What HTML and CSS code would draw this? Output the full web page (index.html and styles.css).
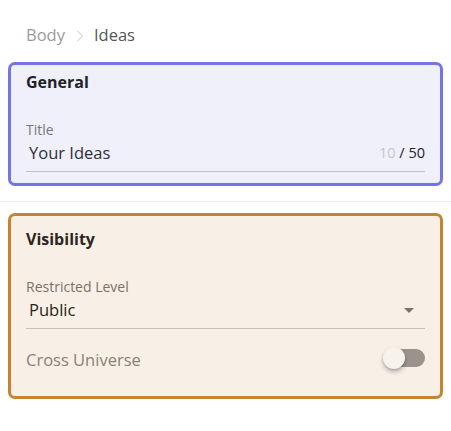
FILE: index.html
```html
<!DOCTYPE html>
<html>
<head>
<meta charset="utf-8">
<link rel="stylesheet" href="styles.css">
</head>
<body>
<div class="page">
  <nav class="crumbs">
    <span class="crumb">Body</span>
    <svg class="sep" width="8" height="12" viewBox="0 0 8 12"><path d="M1.5 1 L6.5 6 L1.5 11" fill="none" stroke="#c2c2c2" stroke-width="1"/></svg>
    <span class="crumb current">Ideas</span>
  </nav>

  <section class="card card-general">
    <h2 class="card-title">General</h2>
    <div class="field">
      <label class="field-label">Title</label>
      <div class="field-control">
        <span class="field-value">Your Ideas</span>
        <span class="counter"><span class="count">10</span> / 50</span>
      </div>
    </div>
  </section>

  <hr class="divider">

  <section class="card card-visibility">
    <h2 class="card-title">Visibility</h2>
    <div class="field">
      <label class="field-label">Restricted Level</label>
      <div class="field-control">
        <span class="field-value">Public</span>
        <span class="caret"></span>
      </div>
    </div>
    <div class="switch-row">
      <span class="switch-label">Cross Universe</span>
      <span class="switch"><span class="track"></span><span class="thumb"></span></span>
    </div>
  </section>
</div>
</body>
</html>
```

FILE: styles.css
```css
* { box-sizing: border-box; }
html, body { margin: 0; padding: 0; background: #ffffff; }
body {
  font-family: "Open Sans", "Noto Sans", "Liberation Sans", sans-serif;
  color: #2a2a33;
}
.page { padding: 0 8px; }

.crumbs {
  display: flex;
  align-items: center;
  gap: 9px;
  height: 24px;
  margin-top: 23px;
  padding-left: 18px;
  font-size: 16.5px;
  line-height: 24px;
}
.crumb { color: #9a9a9a; }
.crumb.current { color: #555555; }
.sep { display: block; margin: 1px 1px 0 2px; }

.card {
  border: 3px solid;
  border-radius: 7px;
  padding: 0 15px;
}
.card-general {
  margin-top: 15px;
  background: #f0f0fb;
  border-color: #7474e8;
  padding-top: 7px;
  padding-bottom: 11px;
}
.card-visibility {
  background: #f8f0e7;
  border-color: #c8842c;
  padding-top: 13px;
  padding-bottom: 24px;
}
.card-title {
  margin: 0;
  font-size: 16px;
  line-height: 20px;
  font-weight: 700;
  color: #1f1f28;
}
.card-visibility .card-title { color: #2e2620; }

.field { margin-top: 30px; }
.field-label {
  display: block;
  font-size: 14px;
  line-height: 16px;
  color: #77777f;
}
.card-visibility .field-label { color: #7b7068; }
.field-control {
  display: flex;
  align-items: center;
  justify-content: space-between;
  margin-top: 3px;
  height: 31px;
  padding: 0 0 6px 3px;
  border-bottom: 1px solid #c2c2ca;
}
.card-visibility .field-control {
  margin-top: 3px;
  border-bottom-color: #cbbfb3;
}
.field-value {
  font-size: 16.5px;
  line-height: 24px;
  color: #2f2f3a;
}
.card-visibility .field-value { color: #2a2420; }
.counter {
  font-size: 14.5px;
  line-height: 24px;
  color: #222226;
}
.count { color: #c6c6cf; }
.caret {
  width: 0;
  height: 0;
  margin-right: 11px;
  border-left: 5px solid transparent;
  border-right: 5px solid transparent;
  border-top: 5px solid #7a7068;
}

.divider {
  border: 0;
  border-top: 1px solid #ececec;
  margin: 15px -8px 11px;
}

.switch-row {
  display: flex;
  align-items: center;
  justify-content: space-between;
  margin-top: 19px;
  height: 24px;
}
.switch-label {
  font-size: 16.5px;
  line-height: 24px;
  color: #8a8078;
}
.switch {
  position: relative;
  width: 42px;
  height: 24px;
  margin-top: -4px;
}
.track {
  position: absolute;
  right: 0;
  top: 3px;
  width: 38px;
  height: 18px;
  border-radius: 9px;
  background: #9b928b;
}
.thumb {
  position: absolute;
  left: 0;
  top: 1px;
  width: 22px;
  height: 22px;
  border-radius: 50%;
  background: #f8f2ec;
  box-shadow: 0 3px 4px rgba(0,0,0,0.25), 0 1px 2px rgba(0,0,0,0.12);
}
```
